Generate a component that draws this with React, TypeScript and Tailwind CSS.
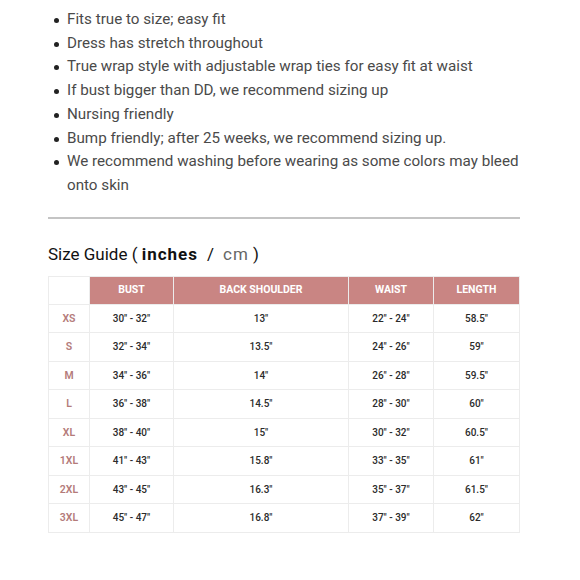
const bullets = [
  "Fits true to size; easy fit",
  "Dress has stretch throughout",
  "True wrap style with adjustable wrap ties for easy fit at waist",
  "If bust bigger than DD, we recommend sizing up",
  "Nursing friendly",
  "Bump friendly; after 25 weeks, we recommend sizing up.",
  "We recommend washing before wearing as some colors may bleed onto skin",
];

const rows = [
  ["XS", '30" - 32"', '13"', '22" - 24"', '58.5"'],
  ["S", '32" - 34"', '13.5"', '24" - 26"', '59"'],
  ["M", '34" - 36"', '14"', '26" - 28"', '59.5"'],
  ["L", '36" - 38"', '14.5"', '28" - 30"', '60"'],
  ["XL", '38" - 40"', '15"', '30" - 32"', '60.5"'],
  ["1XL", '41" - 43"', '15.8"', '33" - 35"', '61"'],
  ["2XL", '43" - 45"', '16.3"', '35" - 37"', '61.5"'],
  ["3XL", '45" - 47"', '16.8"', '37" - 39"', '62"'],
];

const headers = ["BUST", "BACK SHOULDER", "WAIST", "LENGTH"];
const widths = ["w-[84px]", "w-[175px]", "w-[85px]", "w-[86px]"];

export default function App() {
  return (
    <div className="w-[580px] h-[580px] bg-white font-['Roboto',sans-serif] overflow-hidden">
      <div className="ml-[48px] w-[472px] pt-[8px]">
        <ul className="w-[482px] text-[15.2px] leading-[23.7px] text-[#4a4a4a]">
          {bullets.map((b) => (
            <li key={b} className="flex">
              <span className="w-[19px] shrink-0 flex justify-start pl-[6px] pt-[10px]">
                <span className="block w-[5px] h-[5px] rounded-full bg-[#222]" />
              </span>
              <span>{b}</span>
            </li>
          ))}
        </ul>

        <div className="mt-[19px] h-[2px] bg-[#c4c4c4]" />

        <h2 className="mt-[23px] text-[17px] leading-[24px] text-[#111]">
          Size Guide ({" "}
          <span className="font-bold tracking-[1px]">inches</span>
          <span className="mx-[9px]">/</span>
          <span className="text-[#666] tracking-[1px]">cm</span> )
        </h2>

        <table className="mt-[10px] border-collapse text-[10px] text-center">
          <thead>
            <tr className="h-[28px]">
              <th className="w-[41px] border border-[#ececec] bg-white" />
              {headers.map((h, i) => (
                <th
                  key={h}
                  className={`${widths[i]} border border-[#ececec] bg-[#c98583] text-white font-bold text-[10.5px]`}
                >
                  {h}
                </th>
              ))}
            </tr>
          </thead>
          <tbody>
            {rows.map((r) => (
              <tr key={r[0]} className="h-[28.5px]">
                <td className="border border-[#ececec] text-[#b47b7a] font-semibold text-[10.5px]">{r[0]}</td>
                {r.slice(1).map((c, i) => (
                  <td key={i} className="border border-[#ececec] text-[#2b2b2b] font-medium">
                    {c}
                  </td>
                ))}
              </tr>
            ))}
          </tbody>
        </table>
      </div>
    </div>
  );
}
